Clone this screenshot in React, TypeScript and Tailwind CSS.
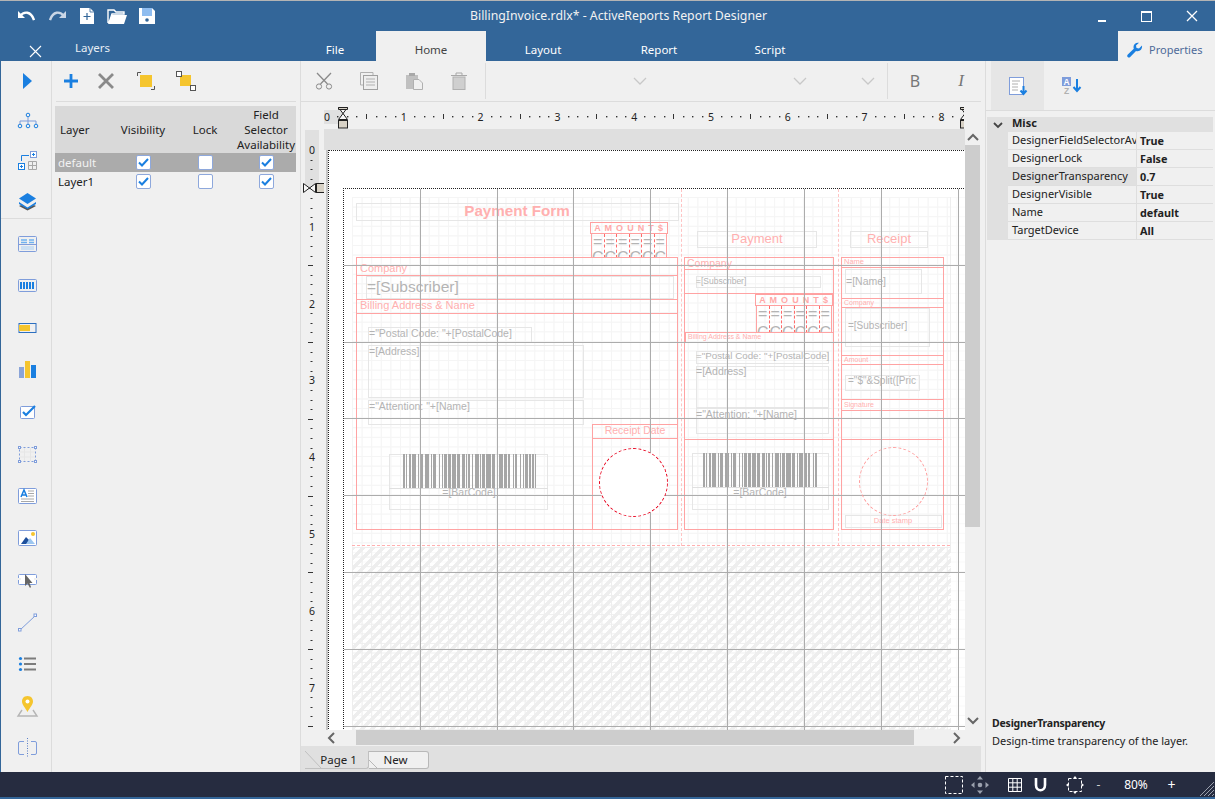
import React from "react";

const BLUE = "#1a7fe0";
const PERI = "#7f9ddb";
const YEL = "#f5c52e";

const Ic = ({ children, w = 24, h = 24 }: { children: React.ReactNode; w?: number; h?: number }) => (
  <svg width={w} height={h} viewBox={`0 0 ${w} ${h}`} fill="none" className="block shrink-0">
    {children}
  </svg>
);

/* ---------- rail icons ---------- */
const railTop = [
  <path key="a" d="M8 4 L17 12 L8 20 Z" fill={BLUE} />,
  <g key="b" stroke={BLUE} strokeWidth="1">
    <circle cx="13" cy="6" r="1.8" />
    <path d="M13 8 V12 M5 15 V12 H21 V15 M13 12 V15" stroke={PERI} />
    <circle cx="5" cy="17" r="1.8" />
    <circle cx="13" cy="17" r="1.8" />
    <circle cx="21" cy="17" r="1.8" />
  </g>,
  <g key="c">
    <path d="M6.5 12 V6.5 H14" stroke={BLUE} />
    <rect x="15.5" y="2.5" width="6" height="6" stroke={PERI} fill="#fff" />
    <path d="M18.5 4 V7 M17 5.5 H20" stroke={BLUE} />
    <rect x="3.5" y="14.5" width="6" height="6" stroke={BLUE} fill="#fff" />
    <path d="M6.5 16 V19 M5 17.5 H8" stroke={BLUE} />
    <path d="M13.5 12.5 H21.5 V20.5 H13.5 Z M17.5 12.5 V20.5 M13.5 16.5 H21.5" stroke="#a8a8a8" />
  </g>,
  <g key="d">
    <path d="M12.5 13 L4 17 L12.5 21.5 L21 17 Z" fill="#555" />
    <path d="M12.5 11 L4 15 L12.5 19 L21 15 Z" fill="#f0f0f0" />
    <path d="M12.5 4 L4 9.5 L12.5 15 L21 9.5 Z" fill={BLUE} />
    <path d="M4 13 L12.5 18.5 L21 13 L21 15 L12.5 20 L4 15 Z" fill={BLUE} />
  </g>,
];

const railBottom = [
  <g key="a">
    <rect x="3.5" y="4.5" width="18" height="15" rx="1" stroke={PERI} />
    <path d="M6 8 H12 M14 8 H19 M6 10.5 H12 M14 10.5 H19" stroke="#6fb2f0" strokeWidth="1.6" />
    <path d="M3.5 12.5 H21.5" stroke={PERI} />
    <path d="M6 15 H19 M6 17 H19" stroke="#a5cdf3" strokeWidth="1.2" />
  </g>,
  <g key="b">
    <rect x="3.5" y="5.5" width="18" height="12" rx="1" stroke={PERI} />
    <path d="M6 8 V15 M9 8 V15 M12 8 V15 M15 8 V15 M18 8 V15" stroke={BLUE} strokeWidth="2" />
  </g>,
  <g key="c">
    <rect x="4" y="7.5" width="17" height="9" stroke="#2c6fc0" />
    <rect x="4" y="9" width="11" height="6" fill={YEL} />
  </g>,
  <g key="d">
    <rect x="4" y="9" width="5" height="11" fill="#8aa4d8" />
    <rect x="10" y="3" width="5" height="17" fill={YEL} />
    <rect x="16" y="7" width="5" height="13" fill={BLUE} />
  </g>,
  <g key="e">
    <rect x="5.5" y="6.5" width="14" height="12" rx="1" stroke={PERI} fill="#fff" />
    <path d="M8 12 L11 15 L20 6" stroke={BLUE} strokeWidth="2.2" />
  </g>,
  <g key="f">
    <rect x="4.5" y="5.5" width="16" height="14" stroke={PERI} strokeDasharray="2 2" />
    <path d="M9.5 6 V19 M15.5 6 V19 M5 10 H20 M5 15 H20" stroke="#e6e6e6" />
    {[[3, 4], [19, 4], [3, 18], [19, 18]].map(([x, y]) => (
      <rect key={x * 100 + y} x={x + 0.5} y={y + 0.5} width="2" height="2" stroke={PERI} fill="#fff" />
    ))}
  </g>,
  <g key="g">
    <rect x="3.5" y="4.5" width="18" height="15" rx="1" stroke={PERI} fill="#fff" />
    <path d="M6 13 L9 6 L12 13 M7 11 H11" stroke={BLUE} strokeWidth="1.5" />
    <path d="M13 7 H19 M13 9.5 H19 M13 12 H19 M6 15 H19 M6 17.5 H19" stroke="#a8a8a8" />
  </g>,
  <g key="h">
    <rect x="3.5" y="4.5" width="18" height="15" rx="1" stroke={PERI} fill="#fff" />
    <path d="M6 18 L11 11 L14 14 L12 18 Z" fill="#1d4f9c" />
    <path d="M11 18 L15 12 L20 18 Z" fill="#9cc6f0" />
    <circle cx="18" cy="8" r="2" fill={YEL} />
  </g>,
  <g key="i">
    <rect x="3.5" y="6.5" width="18" height="10" rx="1" stroke={PERI} fill="#fff" />
    <path d="M10 6 V18 L12.5 15.5 L15 20 L16 19 L14.5 15 H17.5 Z" fill="#666" />
    <path d="M3 11 H6 M19 11 H22" stroke="#f0f0f0" strokeWidth="2" />
  </g>,
  <g key="j">
    <path d="M5 20 L20 6" stroke={PERI} />
    <rect x="3.5" y="18.5" width="2.5" height="2.5" stroke={PERI} fill="#fff" />
    <rect x="19" y="4" width="2.5" height="2.5" stroke={PERI} fill="#fff" />
  </g>,
  <g key="k">
    <circle cx="5.5" cy="6.5" r="1.6" fill={BLUE} />
    <circle cx="5.5" cy="12" r="1.6" fill={BLUE} />
    <circle cx="5.5" cy="17.5" r="1.6" fill={BLUE} />
    <path d="M9 6.5 H21 M9 12 H21 M9 17.5 H21" stroke="#7c7c7c" strokeWidth="2" />
  </g>,
  <g key="l">
    <path d="M7 16 L3 22 H22 L18 16" stroke="#b5b5b5" strokeWidth="1.4" />
    <path d="M12.5 2 C8.5 2 7 5 7 7.5 C7 11 10.5 14 12.5 18 C14.5 14 18 11 18 7.5 C18 5 16.5 2 12.5 2 Z" fill={YEL} />
    <circle cx="12.5" cy="7.5" r="2" fill="#fff" />
  </g>,
  <g key="m">
    <path d="M9 5.5 H5 Q3.5 5.5 3.5 7 V17 Q3.5 18.5 5 18.5 H9 M16 5.5 H20 Q21.5 5.5 21.5 7 V17 Q21.5 18.5 20 18.5 H16" stroke={PERI} />
    <path d="M12.5 2 V22" stroke="#5a7fc7" strokeDasharray="1 1.5" />
  </g>,
];

/* ---------- checkbox ---------- */
const Check = ({ on }: { on: boolean }) => (
  <div className="w-[15px] h-[15px] bg-white border border-[#8ea8dc] rounded-[2px] flex items-center justify-center">
    {on && (
      <svg width="11" height="9" viewBox="0 0 11 9" fill="none">
        <path d="M1 4.5 L4 7.5 L10 1" stroke={BLUE} strokeWidth="2" />
      </svg>
    )}
  </div>
);

/* ---------- canvas helpers (page coordinates on a free canvas) ---------- */
const box = (l: number, t: number, r: number, b: number): React.CSSProperties => ({
  left: l - 324,
  top: t - 129,
  width: r - l + 1,
  height: b - t + 1,
});

const Rb = ({ l, t, r, b }: { l: number; t: number; r: number; b: number }) => (
  <div className="absolute border border-[#ffa3a3]" style={box(l, t, r, b)} />
);
const Gb = ({ l, t, r, b }: { l: number; t: number; r: number; b: number }) => (
  <div className="absolute border border-[#e6e6e6]" style={box(l, t, r, b)} />
);
const Hl = ({ l, r, y }: { l: number; r: number; y: number }) => (
  <div className="absolute bg-[#ffa3a3]" style={box(l, y, r, y)} />
);
const Tx = ({
  x,
  y,
  s,
  pink,
  bold,
  center,
  children,
}: {
  x: number;
  y: number;
  s: number;
  pink?: boolean;
  bold?: boolean;
  center?: boolean;
  children: React.ReactNode;
}) => (
  <div
    className={`absolute whitespace-nowrap leading-none -translate-y-1/2 ${pink ? "text-[#ffb0b0]" : "text-[#b4b4b4]"} ${bold ? "font-bold" : "font-normal"} ${center ? "-translate-x-1/2" : ""}`}
    style={{ left: x - 324, top: y - 129, fontSize: s }}
  >
    {children}
  </div>
);

const barWidths = [2,1,1,2,2,1,4,2,1,1,3,2,4,2,1,1,3,3,1,2,1,1,3,1,3,1,4,1,3,2,3,1,1,1,2,2,1,2,4,1,1,1,3,1,5,1,3,2,1,1,4,1,3,1,2,3,1,1,2,3,1,2,1,1,3,1,2,1,2,1,2];
const Bars = ({ l, t, r, b }: { l: number; t: number; r: number; b: number }) => (
  <div className="absolute flex overflow-hidden" style={box(l, t, r, b)}>
    {barWidths.map((w, i) => (
      <div key={i} className={`shrink-0 ${i % 2 === 0 ? "bg-[#a6a6a6]" : "bg-transparent"}`} style={{ width: w }} />
    ))}
  </div>
);

const Amount = ({ l, t, bottom, gap }: { l: number; t: number; bottom: number; gap: number }) => (
  <>
    <div className="absolute border border-[#ffa0a0] flex items-center justify-center overflow-hidden text-[#ffa9a9] font-bold text-[9px] tracking-[0.8px] whitespace-nowrap leading-none" style={box(l, t, l + 77, t + 11)}>
      A M O U N T $
    </div>
    <div className="absolute flex border-x border-[#ffa3a3] overflow-hidden" style={box(l + 1, t + 12, l + 76, bottom)}>
      {[0, 1, 2, 3, 4, 5].map((i) => (
        <div key={i} className={`flex-1 flex flex-col items-center overflow-hidden text-[#b4b4b4] text-[16px] leading-[14px] pt-[1px] ${i < 5 ? "border-r border-dashed border-[#ff6a6a]" : ""}`}>
          <div style={{ marginBottom: gap }}>=</div>
          <div>C</div>
        </div>
      ))}
    </div>
  </>
);

const majorV = [420, 497, 573, 650, 727, 804, 881, 958];
const majorH = [265, 342, 418, 495, 572, 649, 726];

const Surface = () => (
  <div className="relative flex-1 overflow-hidden bg-[#f0f0f0] font-['Liberation_Sans',sans-serif]">
    <div className="absolute bg-[#dfdfdf]" style={box(324, 129, 965, 149)} />
    <div className="absolute bg-[#c4c4c4]" style={box(326, 150, 327, 730)} />
    <div className="absolute bg-white border-l border-t border-dotted border-[#222]" style={box(328, 150, 965, 730)} />
    {/* report body */}
    <div className="absolute bg-white border-l border-t border-dotted border-[#222]" style={box(343, 188, 965, 730)} />
    <div className="absolute bg-[linear-gradient(to_right,#f9f9f9_1px,transparent_1px),linear-gradient(to_bottom,#f9f9f9_1px,transparent_1px)] bg-[size:9.6px_9.6px]" style={box(352, 197, 965, 730)} />
    <div className="absolute border-r border-[#eeeeee] bg-[linear-gradient(to_right,#f5f5f5_1px,transparent_1px),linear-gradient(to_bottom,#f5f5f5_1px,transparent_1px)] bg-[size:9.6px_9.6px]" style={box(352, 197, 950, 546)} />
    <div className="absolute bg-[repeating-linear-gradient(135deg,#eeeeee_0px,#eeeeee_3px,transparent_3px,transparent_7.07px),linear-gradient(to_right,#eeeeee_1px,transparent_1px),linear-gradient(to_bottom,#eeeeee_1px,transparent_1px)] bg-[size:auto,9.6px_9.6px,9.6px_9.6px]" style={box(352, 547, 950, 730)} />

    {/* section separators */}
    <div className="absolute border-l border-dashed border-[#ffc4c4]" style={box(681, 189, 681, 545)} />
    <div className="absolute border-l border-dashed border-[#ffc4c4]" style={box(838, 189, 838, 545)} />
    <div className="absolute border-t border-dashed border-[#ffb0b0]" style={box(352, 545, 949, 545)} />

    {/* Payment form */}
    <Gb l={356} t={203} r={678} b={220} />
    <Tx x={517} y={211} s={15.2} pink bold center>Payment Form</Tx>
    <Amount l={590} t={222} bottom={257} gap={2} />
    <Rb l={356} t={257} r={677} b={529} />
    <Hl l={356} r={677} y={275} />
    <Hl l={356} r={677} y={299} />
    <Hl l={356} r={677} y={313} />
    <Tx x={360} y={268} s={11} pink>Company</Tx>
    <Gb l={366} t={276} r={673} b={298} />
    <Tx x={367} y={287} s={15.5}>=[Subscriber]</Tx>
    <Tx x={360} y={305} s={11} pink>Billing Address &amp; Name</Tx>
    <Gb l={368} t={327} r={531} b={342} />
    <Tx x={369} y={333} s={10.5}>="Postal Code: "+[PostalCode]</Tx>
    <Gb l={368} t={345} r={583} b={397} />
    <Tx x={369} y={351} s={10.5}>=[Address]</Tx>
    <Gb l={368} t={400} r={583} b={424} />
    <Tx x={369} y={406} s={10.5}>="Attention: "+[Name]</Tx>
    <Gb l={389} t={454} r={547} b={509} />
    <Bars l={403} t={454} r={535} b={487} />
    <div className="absolute bg-[#e0e0e0]" style={box(389, 488, 547, 488)} />
    <Tx x={469} y={492} s={10.5} center>=[BarCode]</Tx>
    <Rb l={592} t={424} r={677} b={529} />
    <Hl l={592} r={677} y={438} />
    <Tx x={635} y={430} s={10.5} pink center>Receipt Date</Tx>

    {/* Payment */}
    <Gb l={697} t={231} r={816} b={247} />
    <Tx x={757} y={238} s={13} pink center>Payment</Tx>
    <Rb l={684} t={257} r={833} b={529} />
    <Hl l={684} r={833} y={269} />
    <Hl l={684} r={833} y={293} />
    <Hl l={684} r={833} y={439} />
    <Tx x={687} y={263} s={10.5} pink>Company</Tx>
    <Gb l={696} t={276} r={820} b={287} />
    <Tx x={696} y={281} s={8.5}>=[Subscriber]</Tx>
    <Amount l={755} t={294} bottom={332} gap={5} />
    <Rb l={685} t={332} r={833} b={342} />
    <Tx x={688} y={336} s={7} pink>Billing Address &amp; Name</Tx>
    <Gb l={696} t={351} r={828} b={363} />
    <Tx x={696} y={356} s={9.8}>="Postal Code: "+[PostalCode]</Tx>
    <Gb l={696} t={366} r={828} b={407} />
    <Tx x={696} y={371} s={10.5}>=[Address]</Tx>
    <Gb l={696} t={408} r={828} b={433} />
    <Tx x={696} y={414} s={10.5}>="Attention: "+[Name]</Tx>
    <Gb l={692} t={453} r={828} b={509} />
    <Bars l={703} t={453} r={818} b={486} />
    <div className="absolute bg-[#e0e0e0]" style={box(692, 487, 828, 487)} />
    <Tx x={760} y={492} s={10.5} center>=[BarCode]</Tx>

    {/* Receipt */}
    <Gb l={850} t={231} r={927} b={247} />
    <Tx x={889} y={238} s={13} pink center>Receipt</Tx>
    <Rb l={841} t={257} r={943} b={529} />
    <Hl l={841} r={943} y={267} />
    <Tx x={844} y={262} s={7.5} pink>Name</Tx>
    <Gb l={845} t={269} r={921} b={293} />
    <Tx x={846} y={281} s={10.5}>=[Name]</Tx>
    <Hl l={841} r={942} y={298} />
    <Hl l={841} r={942} y={307} />
    <Tx x={844} y={302} s={7} pink>Company</Tx>
    <Gb l={845} t={308} r={929} b={346} />
    <Tx x={848} y={326} s={10}>=[Subscriber]</Tx>
    <Hl l={841} r={942} y={355} />
    <Hl l={841} r={942} y={364} />
    <Tx x={844} y={359} s={7} pink>Amount</Tx>
    <Gb l={845} t={375} r={919} b={390} />
    <Tx x={848} y={381} s={10}>="$"&amp;Split([Pric</Tx>
    <Hl l={841} r={942} y={399} />
    <Hl l={841} r={942} y={410} />
    <Tx x={844} y={404} s={7} pink>Signature</Tx>
    <Hl l={841} r={941} y={439} />
    <Gb l={845} t={515} r={941} b={527} />
    <Tx x={893} y={521} s={7.5} pink center>Date stamp</Tx>

    {/* major grid lines */}
    {majorV.map((x) => (
      <div key={x} className="absolute bg-[#acacac]" style={box(x, 189, x, 730)} />
    ))}
    {majorH.map((y) => (
      <div key={y} className="absolute bg-[#acacac]" style={box(344, y, 965, y)} />
    ))}
    <div className="absolute bg-white rounded-full border border-dashed border-[#e8001c]" style={box(599, 448, 667, 516)} />
    <div className="absolute rounded-full border border-dashed border-[#ff9c9c]" style={box(859, 447, 927, 515)} />
  </div>
);

const Hourglass = ({ x }: { x: number }) => (
  <g transform={`translate(${x} 0)`} stroke="#222" strokeWidth="1" fill="#f7f7f7">
    <path d="M-4.5 5.5 H4.5 L-4.5 17.5 H4.5 Z" />
    <path d="M-4.5 5.5 H4.5 V7.5 H-4.5 Z" fill="#d8d2c6" />
    <rect x="-4.5" y="18.5" width="9" height="7.5" fill="#d8d2c6" />
  </g>
);

const Num = ({ x, y, children }: { x: number; y: number; children: React.ReactNode }) => (
  <text x={x} y={y} textAnchor="middle" fontSize="10.5" fontFamily="'Noto Sans',sans-serif" fill="#222">
    {children}
  </text>
);

const HRuler = () => {
  const ticks = Array.from({ length: 66 }, (_, i) => i);
  return (
    <svg width="641" height="27" viewBox="0 0 641 27" className="block">
      <rect x="1" y="8" width="19" height="14" fill="#e0e0e0" />
      {ticks.map((i) => {
        const x = 4.5 + i * 9.6;
        if (i % 8 === 0) return null;
        return i % 4 === 0 ? (
          <rect key={i} x={Math.round(x)} y="12" width="1" height="5" fill="#333" />
        ) : (
          <rect key={i} x={Math.round(x)} y="14" width="1.4" height="1.4" fill="#333" />
        );
      })}
      {[0, 1, 2, 3, 4, 5, 6, 7, 8].map((n) => (
        <Num key={n} x={4 + n * 76.8} y={19}>{n}</Num>
      ))}
      <Hourglass x={20} />
      <Hourglass x={642} />
    </svg>
  );
};

const VRuler = () => {
  const ticks = Array.from({ length: 62 }, (_, i) => i);
  return (
    <div className="w-[23px] shrink-0">
      <svg width="23" height="601" viewBox="0 0 23 601" className="block">
        <rect x="4" y="1" width="14" height="58" fill="#e0e0e0" />
        {ticks.map((i) => {
          const y = 21 + i * 9.6;
          if (i % 8 === 0) return null;
          return i % 4 === 0 ? (
            <rect key={i} x="7" y={Math.round(y)} width="5" height="1" fill="#333" />
          ) : (
            <rect key={i} x="9.5" y={Math.round(y)} width="2" height="1" fill="#333" />
          );
        })}
        {[0, 1, 2, 3, 4, 5, 6, 7].map((n) => (
          <Num key={n} x={11} y={25 + n * 76.8}>{n}</Num>
        ))}
        <g transform="translate(2 54)" stroke="#222" fill="#f7f7f7">
          <path d="M.5 .5 V9.5 L12.5 .5 V9.5 Z" />
          <rect x="13.5" y=".5" width="8" height="9" fill="#d8d2c6" />
        </g>
      </svg>
    </div>
  );
};

const Chev = ({ d, c = "#666", w = 2 }: { d: string; c?: string; w?: number }) => (
  <svg width="14" height="14" viewBox="0 0 14 14" fill="none" className="block">
    <path d={d} stroke={c} strokeWidth={w} />
  </svg>
);

const Prop = ({ n, v, sel }: { n: string; v: string; sel?: boolean }) => (
  <div className="flex h-[18px] border-b border-[#dedede]">
    <div className={`w-[129px] pl-[4px] overflow-hidden whitespace-nowrap border-r border-[#dedede] leading-[16px] ${sel ? "bg-[#e0e0e0]" : ""}`}>{n}</div>
    <div className="flex-1 pl-[3px] font-bold text-[10.8px] leading-[17px]">{v}</div>
  </div>
);

export default function App() {
  return (
    <div className="w-[1215px] h-[799px] flex flex-col bg-[#f0f0f0] text-[11.5px] text-[#222] overflow-hidden font-['Noto_Sans',sans-serif]">
      <div className="h-px bg-[#b4b4b4]" />
      {/* header */}
      <div className="h-[60px] bg-[#336699] text-white flex flex-col">
        <div className="h-[30px] flex items-center">
          <div className="w-[300px] flex items-center pl-[17px]">
            <Ic w={18} h={12}>
              <path d="M1 1 V8 H8 Z" fill="#fff" />
              <path d="M3 6 C7 1 14 1 17 10" stroke="#fff" strokeWidth="2.4" />
            </Ic>
            <div className="ml-[14px]">
              <Ic w={18} h={12}>
                <path d="M17 1 V8 H10 Z" fill="#c9d6e6" />
                <path d="M15 6 C11 1 4 1 1 10" stroke="#c9d6e6" strokeWidth="2.4" />
              </Ic>
            </div>
            <div className="ml-[12px]">
              <Ic w={16} h={18}>
                <path d="M1 1 H11 L15 5 V17 H1 Z" fill="#fff" />
                <path d="M8 6 V13 M4.5 9.5 H11.5" stroke="#336699" strokeWidth="1.2" />
                <path d="M11 1 V5 H15" stroke="#336699" strokeWidth="0.8" />
              </Ic>
            </div>
            <div className="ml-[12px]">
              <Ic w={20} h={18}>
                <path d="M1 16 V3 H7 L9 5 H17 V7 H5 L2 16" stroke="#fff" strokeWidth="1.4" />
                <path d="M1 17 L5 8 H20 L17 17 Z" fill="#fff" />
              </Ic>
            </div>
            <div className="ml-[11px]">
              <Ic w={18} h={18}>
                <path d="M1 1 H14 L17 4 V17 H1 Z" fill="#fff" />
                <rect x="4" y="1" width="10" height="8" fill="#8fbdf0" />
                <circle cx="9" cy="13" r="1.8" fill="#336699" />
              </Ic>
            </div>
          </div>
          <div className="flex-1 text-center text-[12.3px] text-[#f2f2f2]">BillingInvoice.rdlx* - ActiveReports Report Designer</div>
          <div className="w-[278px] flex pl-[142px]">
            <div className="w-[45px] flex justify-center items-center pt-[9px]"><div className="w-[8px] h-[2px] bg-white" /></div>
            <div className="w-[45px] flex justify-center items-center"><div className="w-[11px] h-[11px] border border-white border-t-2" /></div>
            <div className="w-[45px] flex justify-center items-center">
              <Ic w={12} h={12}><path d="M1 1 L11 11 M11 1 L1 11" stroke="#fff" strokeWidth="1.3" /></Ic>
            </div>
          </div>
        </div>
        <div className="h-[30px] flex">
          <div className="w-[29px]" />
          <div className="w-[46px] flex items-end pb-[3px]">
            <Ic w={13} h={13}><path d="M1 1 L12 12 M12 1 L1 12" stroke="#fff" strokeWidth="1.1" /></Ic>
          </div>
          <div className="w-[219px] pt-[9px] leading-[16px] text-[#e8eef5]">Layers</div>
          <div className="w-[82px] flex items-center justify-center pt-[8px]">File</div>
          <div className="w-[110px] bg-[#f0f0f0] text-[#444] flex items-center justify-center pt-[8px]">Home</div>
          <div className="w-[114px] flex items-center justify-center pt-[8px]">Layout</div>
          <div className="w-[118px] flex items-center justify-center pt-[8px]">Report</div>
          <div className="w-[104px] flex items-center justify-center pt-[8px]">Script</div>
          <div className="w-[296px]" />
          <div className="flex-1 bg-[#f0f0f0] text-[#4d6a99] text-[11px] flex items-center pl-[9px] gap-[6px] pt-[8px]">
            <Ic w={16} h={16}>
              <path d="M15 3.5 L12 6.5 L9.5 6 L9 3.5 L12 .8 C9 .2 6.5 2 6.5 5 C6.5 5.6 6.6 6.2 6.8 6.7 L.8 12.6 C0 13.4 0 14.4 .7 15 C1.4 15.7 2.4 15.7 3.2 15 L9 9 C12.5 10 15.6 7.5 15 3.5 Z" fill={BLUE} />
            </Ic>
            <span>Properties</span>
          </div>
        </div>
      </div>

      {/* body */}
      <div className="h-[711px] flex">
        {/* rail */}
        <div className="w-[52px] shrink-0 border-l border-[#336699] border-r border-r-[#dcdcdc] flex flex-col pl-[14px]">
          <div className="h-[158px] -ml-[14px] pl-[14px] border-b border-[#dcdcdc]">
            {railTop.map((ic, i) => (
              <div key={i} className="h-[40px] flex items-center"><Ic>{ic}</Ic></div>
            ))}
          </div>
          <div className="h-[4px]" />
          {railBottom.map((ic, i) => (
            <div key={i} className="h-[42px] flex items-center"><Ic>{ic}</Ic></div>
          ))}
        </div>

        {/* layers */}
        <div className="w-[249px] shrink-0 border-r border-[#dcdcdc] flex flex-col">
          <div className="h-[41px] mx-[4px] border-b border-[#dcdcdc] flex items-center">
            <div className="w-[30px] flex justify-center">
              <Ic w={16} h={16}><path d="M8 1 V15 M1 8 H15" stroke={BLUE} strokeWidth="2.8" /></Ic>
            </div>
            <div className="w-[40px] flex justify-center">
              <Ic w={16} h={16}><path d="M1 1 L15 15 M15 1 L1 15" stroke="#8a8a8a" strokeWidth="2.8" /></Ic>
            </div>
            <div className="w-[40px] flex justify-center">
              <Ic w={18} h={18}>
                <rect x="3" y="3" width="12" height="12" fill={YEL} />
                <path d="M.5 4 V.5 H4 M17.5 14 V17.5 H14" stroke="#555" />
              </Ic>
            </div>
            <div className="w-[40px] flex justify-center">
              <Ic w={20} h={20}>
                <rect x="4" y="4" width="11" height="11" fill={YEL} />
                <rect x=".5" y=".5" width="5" height="5" stroke="#555" fill="#fff" />
                <rect x="14.5" y="14.5" width="5" height="5" stroke="#555" fill="#fff" />
              </Ic>
            </div>
          </div>
          <div className="mt-[4px] ml-[3px] w-[241px]">
            <div className="h-[47px] bg-[#d9d9d9] grid grid-cols-[57px_62px_62px_60px] items-center text-center leading-[15px]">
              <div className="text-left pl-[5px]">Layer</div>
              <div>Visibility</div>
              <div>Lock</div>
              <div>Field<br />Selector<br />Availability</div>
            </div>
            <div className="h-[19px] bg-[#ababab] grid grid-cols-[57px_62px_62px_60px] items-center justify-items-center text-[#f2f2f2]">
              <div className="justify-self-start pl-[3px]">default</div>
              <Check on />
              <Check on={false} />
              <Check on />
            </div>
            <div className="h-[19px] grid grid-cols-[57px_62px_62px_60px] items-center justify-items-center">
              <div className="justify-self-start pl-[3px]">Layer1</div>
              <Check on />
              <Check on={false} />
              <Check on />
            </div>
          </div>
        </div>

        {/* designer */}
        <div className="w-[685px] shrink-0 border-r border-[#dcdcdc] flex flex-col">
          <div className="h-[41px] shrink-0 w-[680px] border-b border-[#dcdcdc] flex items-center">
            <div className="w-[185px] h-[36px] flex items-center border-r border-[#dcdcdc]">
              <div className="w-[45px] flex justify-center">
                <Ic w={18} h={18}>
                  <path d="M2 1 L12.5 12 M16 1 L5.5 12" stroke="#8a8a8a" strokeWidth="1.3" />
                  <circle cx="4" cy="14.5" r="2.6" stroke="#8a8a8a" />
                  <circle cx="14" cy="14.5" r="2.6" stroke="#8a8a8a" />
                </Ic>
              </div>
              <div className="w-[45px] flex justify-center">
                <Ic w={18} h={18}>
                  <path d="M3.5 13 H.5 V.5 H13 V3" stroke="#b0b0b0" />
                  <rect x="3.5" y="3.5" width="14" height="14" stroke="#a0a0a0" fill="#eee" />
                  <path d="M6 7 H15 M6 10 H15 M6 13 H15" stroke="#b0b0b0" />
                </Ic>
              </div>
              <div className="w-[45px] flex justify-center">
                <Ic w={18} h={18}>
                  <rect x="1" y="3" width="12" height="14" fill="#c0c0c0" />
                  <rect x="4" y="1" width="6" height="3" fill="#a8a8a8" />
                  <path d="M8.5 7.5 H14 L17.5 11 V17.5 H8.5 Z" stroke="#b0b0b0" fill="#f0f0f0" />
                </Ic>
              </div>
              <div className="w-[45px] flex justify-center">
                <Ic w={18} h={18}>
                  <path d="M1 3.5 H17 M6 3.5 V1 H12 V3.5" stroke="#a8a8a8" />
                  <rect x="3" y="5" width="12" height="12.5" fill="#cfcfcf" stroke="#b0b0b0" />
                </Ic>
              </div>
            </div>
            <div className="w-[161px] flex justify-end"><Chev d="M1 4 L7 10 L13 4" c="#c8c8c8" w={1.3} /></div>
            <div className="w-[160px] flex justify-end"><Chev d="M1 4 L7 10 L13 4" c="#c8c8c8" w={1.3} /></div>
            <div className="w-[68px] flex justify-end"><Chev d="M1 4 L7 10 L13 4" c="#c8c8c8" w={1.3} /></div>
            <div className="w-[13px] h-[36px] border-r border-[#dcdcdc]" />
            <div className="w-[54px] text-center text-[16px] text-[#777]">B</div>
            <div className="w-[38px] text-center text-[17px] italic font-['Liberation_Serif',serif] text-[#777]">I</div>
          </div>
          <div className="h-[27px] shrink-0 pl-[22px] overflow-hidden"><HRuler /></div>
          <div className="h-[601px] shrink-0 flex w-[679px]">
            <VRuler />
            <Surface />
            <div className="w-[15px] shrink-0 flex flex-col items-center">
              <div className="h-[16px] flex items-end"><Chev d="M2 9 L7 4 L12 9" /></div>
              <div className="h-[382px] w-full bg-[#cdcdcd]" />
              <div className="flex-1 flex items-end pb-[3px]"><Chev d="M2 5 L7 10 L12 5" /></div>
            </div>
          </div>
          <div className="h-[16px] shrink-0 w-[679px] flex items-stretch">
            <div className="w-[55px] flex items-center justify-end pr-[17px]"><Chev d="M9 2 L4 7 L9 12" /></div>
            <div className="w-[558px] h-[15px] bg-[#cdcdcd]" />
            <div className="flex-1 flex items-center justify-end pr-[17px]"><Chev d="M5 2 L10 7 L5 12" /></div>
          </div>
          <div className="h-[26px] shrink-0 w-[680px] bg-[#e0e0e0] flex pl-[4px] pt-[5px] text-[11.5px]">
            <div className="relative w-[64px] h-[18px] border-b border-r border-[#c0c0c0] rounded-br-[3px] flex items-center justify-center pl-[4px]">
              <svg width="18" height="18" viewBox="0 0 18 18" fill="none" className="absolute left-0 top-0"><path d="M0 0 L16 17" stroke="#c0c0c0" /></svg>
              Page 1
            </div>
            <div className="relative w-[60px] h-[18px] border border-l-0 border-[#b8b8b8] rounded-r-[3px] bg-[#f0f0f0] flex items-center justify-center pr-[6px]">
              <svg width="10" height="18" viewBox="0 0 10 18" fill="none" className="absolute left-0 -top-px"><path d="M0 9 L9 18" stroke="#b8b8b8" /></svg>
              New
            </div>
          </div>
        </div>

        {/* properties */}
        <div className="flex-1 flex flex-col min-w-0 text-[11px]">
          <div className="h-[50px] shrink-0 border-b border-[#dcdcdc] flex pl-[5px]">
            <div className="w-[53px] bg-[#e6e6e6] flex items-center justify-center">
              <Ic w={20} h={20}>
                <rect x="1.5" y="1.5" width="14" height="17" stroke={PERI} fill="#fff" />
                <path d="M4 5 H12 M4 8 H10 M4 11 H10 M4 14 H10" stroke="#b0b0b0" />
                <path d="M15.5 10 V17 M12.5 14.5 L15.5 18 L18.5 14.5" stroke={BLUE} strokeWidth="2" />
              </Ic>
            </div>
            <div className="w-[56px] flex items-center justify-center">
              <Ic w={20} h={20}>
                <rect x="0" y="1" width="9" height="9" fill="#7f9ddb" />
                <text x="4.5" y="8.5" textAnchor="middle" fontSize="8.5" fontWeight="700" fontFamily="'Liberation Sans',sans-serif" fill="#fff">A</text>
                <text x="4.5" y="18" textAnchor="middle" fontSize="8.5" fontWeight="700" fontFamily="'Liberation Sans',sans-serif" fill="#b0b0b0">Z</text>
                <path d="M15 3 V15 M11.5 11 L15 15 L18.5 11" stroke={BLUE} strokeWidth="2" />
              </Ic>
            </div>
          </div>
          <div className="mt-[6px] ml-px w-[226px] flex-1">
            <div className="h-[15px] bg-[#e0e0e0] flex items-center font-bold">
              <div className="w-[21px] flex justify-center"><Chev d="M3 5 L7 9 L11 5" c="#444" w={1.8} /></div>
              <div className="pl-[4px] leading-[10px] -mt-[3px]">Misc</div>
            </div>
            <div className="border-l-[21px] border-[#e0e0e0]">
              <Prop n="DesignerFieldSelectorAvailability" v="True" />
              <Prop n="DesignerLock" v="False" />
              <Prop n="DesignerTransparency" v="0.7" sel />
              <Prop n="DesignerVisible" v="True" />
              <Prop n="Name" v="default" />
              <Prop n="TargetDevice" v="All" />
            </div>
          </div>
          <div className="h-[57px] pl-[6px] leading-[17px]">
            <div className="font-bold text-[10.5px] tracking-[-0.2px]">DesignerTransparency</div>
            <div>Design-time transparency of the layer.</div>
          </div>
        </div>
      </div>

      {/* status */}
      <div className="h-[25px] bg-[#262c40] flex items-center text-white text-[12px]">
        <div className="w-[945px] shrink-0" />
        <div className="w-[26px]"><Ic w={18} h={18}><rect x=".5" y=".5" width="17" height="17" stroke="#fff" strokeDasharray="3 2" /></Ic></div>
        <div className="w-[37px]">
          <Ic w={18} h={18}>
            <circle cx="9" cy="9" r="2.3" fill="#9aa0ad" />
            <path d="M9 0 L12 3.5 H6 Z M9 18 L12 14.5 H6 Z M0 9 L3.5 6 V12 Z M18 9 L14.5 6 V12 Z" fill="#9aa0ad" />
          </Ic>
        </div>
        <div className="w-[26px]">
          <Ic w={14} h={14}><path d="M.5 .5 H13.5 V13.5 H.5 Z M4.8 .5 V13.5 M9.2 .5 V13.5 M.5 4.8 H13.5 M.5 9.2 H13.5" stroke="#fff" /></Ic>
        </div>
        <div className="w-[32px]">
          <Ic w={13} h={15}><path d="M2 1 V8 C2 15 11 15 11 8 V1" stroke="#fff" strokeWidth="2.6" /></Ic>
        </div>
        <div className="w-[20px]">
          <Ic w={18} h={18}>
            <rect x="2.5" y="2.5" width="13" height="13" stroke="#fff" strokeDasharray="3 2" />
            <path d="M9 0 L11 2.5 H7 Z M9 18 L11 15.5 H7 Z M0 9 L2.5 7 V11 Z M18 9 L15.5 7 V11 Z" fill="#fff" />
          </Ic>
        </div>
        <div className="w-[25px] text-center text-[#d0d0d0]">-</div>
        <div className="w-[50px] text-center">80%</div>
        <div className="w-[21px] text-center text-[14px]">+</div>
        <div className="flex-1 flex justify-end self-end">
          <Ic w={17} h={17}><path d="M16 2 L2 16 M16 6 L6 16 M16 10 L10 16 M16 14 L14 16" stroke="#9aa0ad" /></Ic>
        </div>
      </div>
      <div className="h-[2px] bg-[#336699]" />
    </div>
  );
}
